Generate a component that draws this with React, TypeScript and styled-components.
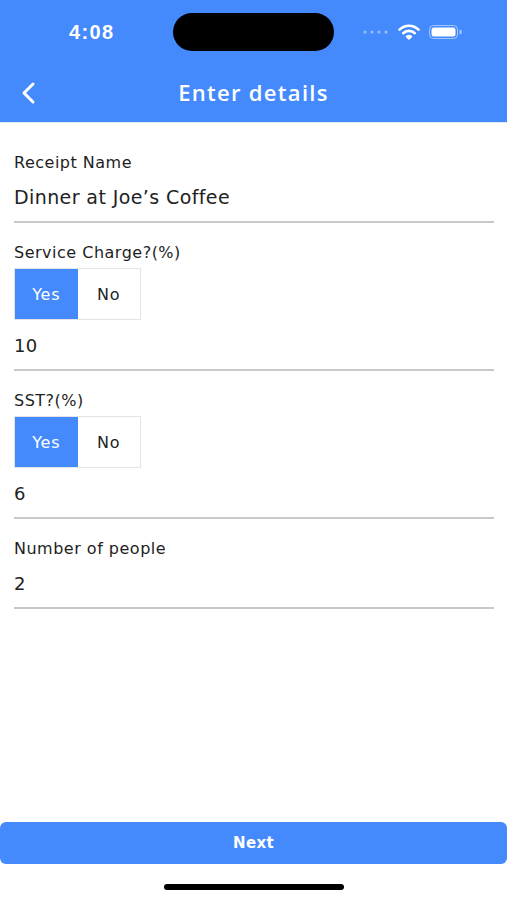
import React from 'react';
import styled, { createGlobalStyle } from 'styled-components';

const GlobalStyle = createGlobalStyle`
  html, body {
    margin: 0;
    padding: 0;
    background: #ffffff;
  }
  * {
    box-sizing: border-box;
  }
`;

const fields = [
  { label: 'Receipt Name', value: 'Dinner at Joe’s Coffee', big: true },
  { label: 'Service Charge?(%)', value: '10', toggle: true },
  { label: 'SST?(%)', value: '6', toggle: true },
  { label: 'Number of people', value: '2' },
];

export default function App() {
  return (
    <>
      <GlobalStyle />
      <Screen>
        <Header>
          <StatusBar>
            <Time>4:08</Time>
            <Island />
            <StatusIcons>
              <svg width="26" height="6" viewBox="0 0 26 6">
                {[2, 9, 16, 23].map((cx) => (
                  <circle key={cx} cx={cx} cy="3" r="1.6" fill="rgba(255,255,255,0.45)" />
                ))}
              </svg>
              <svg width="22" height="16" viewBox="0 0 22 16">
                <path d="M1.5 5.6a13.5 13.5 0 0 1 19 0" stroke="#fff" strokeWidth="2.6" fill="none" strokeLinecap="round" />
                <path d="M5.2 9.2a8.3 8.3 0 0 1 11.6 0" stroke="#fff" strokeWidth="2.6" fill="none" strokeLinecap="round" />
                <path d="M8.6 12.6a3.4 3.4 0 0 1 4.8 0L11 15z" fill="#fff" stroke="#fff" strokeWidth="1.6" strokeLinejoin="round" />
              </svg>
              <svg width="33" height="14" viewBox="0 0 33 14">
                <rect x="0.5" y="0.5" width="28" height="13" rx="4" fill="none" stroke="rgba(255,255,255,0.5)" />
                <rect x="2.5" y="2.5" width="24" height="9" rx="2.5" fill="#fff" />
                <path d="M30.5 4.5v5a2.5 2.5 0 0 0 0-5z" fill="rgba(255,255,255,0.5)" />
              </svg>
            </StatusIcons>
          </StatusBar>
          <NavBar>
            <BackButton aria-label="Back">
              <svg width="16" height="24" viewBox="0 0 16 24">
                <path d="M13 3L4 12l9 9" stroke="#fff" strokeWidth="3" fill="none" strokeLinecap="round" strokeLinejoin="round" />
              </svg>
            </BackButton>
            <Title>Enter details</Title>
          </NavBar>
        </Header>

        <Form>
          {fields.map((f) => (
            <Field key={f.label}>
              <Label>{f.label}</Label>
              {f.toggle && (
                <Segment>
                  <SegmentButton $active>Yes</SegmentButton>
                  <SegmentButton>No</SegmentButton>
                </Segment>
              )}
              <Value $big={f.big}>{f.value}</Value>
            </Field>
          ))}
        </Form>

        <Footer>
          <NextButton>Next</NextButton>
          <HomeIndicator />
        </Footer>
      </Screen>
    </>
  );
}

const Screen = styled.div`
  width: 507px;
  height: 900px;
  display: flex;
  flex-direction: column;
  background: #ffffff;
  font-family: 'DejaVu Sans', 'Liberation Sans', sans-serif;
  overflow: hidden;
`;

const Header = styled.div`
  background: #448afd;
  display: flex;
  flex-direction: column;
  border-bottom: 1px solid #dfe8f7;
`;

const StatusBar = styled.div`
  height: 62px;
  display: flex;
  align-items: center;
  padding: 0 45px 0 69px;
  margin-top: 1px;
`;

const Time = styled.div`
  width: 104px;
  color: #ffffff;
  font-family: 'Liberation Sans', sans-serif;
  font-weight: 700;
  font-size: 20px;
  letter-spacing: 1.4px;
`;

const Island = styled.div`
  width: 161px;
  height: 38px;
  border-radius: 19px;
  background: #000000;
`;

const StatusIcons = styled.div`
  flex: 1;
  display: flex;
  align-items: center;
  justify-content: flex-end;
  gap: 9px;
`;

const NavBar = styled.div`
  height: 59px;
  display: flex;
  align-items: center;
  position: relative;
  padding: 0 0 0 20px;
`;

const BackButton = styled.button`
  border: none;
  background: none;
  padding: 0;
  display: flex;
  align-items: center;
  cursor: pointer;
`;

const Title = styled.h1`
  position: absolute;
  left: 0;
  right: 0;
  top: 50%;
  transform: translateY(-52%);
  margin: 0;
  text-align: center;
  color: #ffffff;
  font-family: 'Open Sans', 'DejaVu Sans', sans-serif;
  font-size: 22px;
  line-height: 30px;
  font-weight: 600;
  letter-spacing: 1.3px;
  pointer-events: none;
`;

const Form = styled.div`
  flex: 1;
  display: flex;
  flex-direction: column;
  gap: 20px;
  padding: 30px 13px 0 14px;
`;

const Field = styled.div`
  display: flex;
  flex-direction: column;
`;

const Label = styled.div`
  height: 20px;
  line-height: 20px;
  font-size: 16px;
  color: #1e1e1e;
  letter-spacing: 0.5px;
`;

const Segment = styled.div`
  display: flex;
  width: 127px;
  height: 52px;
  margin: 5px 0 1px;
  border: 1px solid #e4e4e4;
`;

const SegmentButton = styled.button<{ $active?: boolean }>`
  flex: 1;
  border: none;
  margin: 0;
  padding: 0;
  font-family: inherit;
  font-size: 16px;
  letter-spacing: 0.8px;
  background: ${(p) => (p.$active ? '#448afd' : '#ffffff')};
  color: ${(p) => (p.$active ? '#ffffff' : '#222222')};
`;

const Value = styled.div<{ $big?: boolean }>`
  height: 50px;
  display: flex;
  align-items: center;
  font-size: ${(p) => (p.$big ? '19px' : '18px')};
  color: #222222;
  letter-spacing: 0.4px;
  border-bottom: 2px solid #c8c8c8;
`;

const Footer = styled.div`
  display: flex;
  flex-direction: column;
  align-items: center;
  padding-bottom: 10px;
`;

const NextButton = styled.button`
  width: 100%;
  height: 42px;
  border: none;
  border-radius: 6px;
  background: #448afd;
  color: #ffffff;
  font-family: 'DejaVu Sans', sans-serif;
  font-weight: 700;
  font-size: 15px;
  letter-spacing: 0.3px;
`;

const HomeIndicator = styled.div`
  width: 180px;
  height: 6px;
  margin-top: 20px;
  border-radius: 3px;
  background: #000000;
`;
